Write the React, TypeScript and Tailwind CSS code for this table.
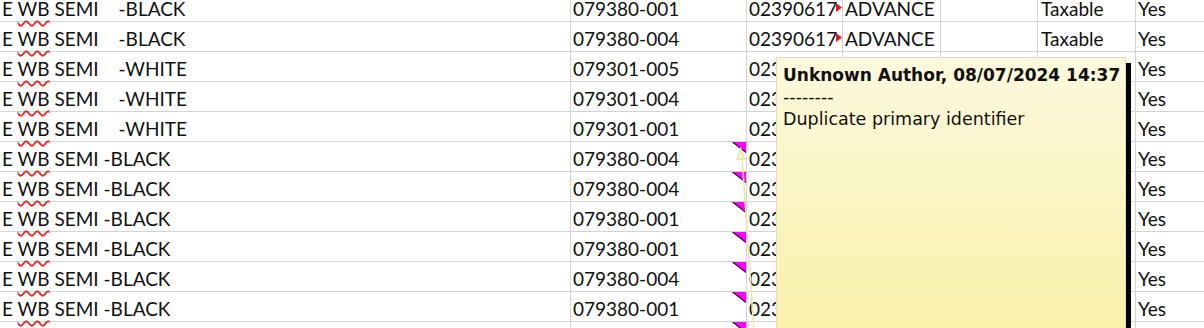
import React from "react";

type Row = {
  a?: string;
  aGap?: number;
  aTail?: string;
  b?: string;
  c?: string;
  d?: string;
  f?: string;
  g?: string;
  redArrow?: boolean;
  mark?: boolean;
};

const rows: Row[] = [
  { a: "E WB SEMI", aGap: 1, aTail: "-BLACK", b: "079380-001", c: "02390617", d: "ADVANCE", f: "Taxable", g: "Yes", redArrow: true },
  { a: "E WB SEMI", aGap: 1, aTail: "-BLACK", b: "079380-004", c: "02390617", d: "ADVANCE", f: "Taxable", g: "Yes", redArrow: true },
  { a: "E WB SEMI", aGap: 1, aTail: "-WHITE", b: "079301-005", c: "02390617", g: "Yes" },
  { a: "E WB SEMI", aGap: 1, aTail: "-WHITE", b: "079301-004", c: "02390617", g: "Yes" },
  { a: "E WB SEMI", aGap: 1, aTail: "-WHITE", b: "079301-001", c: "02390617", g: "Yes" },
  { a: "E WB SEMI", aGap: 0, aTail: "-BLACK", b: "079380-004", c: "02390617", g: "Yes", mark: true },
  { a: "E WB SEMI", aGap: 0, aTail: "-BLACK", b: "079380-004", c: "02390617", g: "Yes", mark: true },
  { a: "E WB SEMI", aGap: 0, aTail: "-BLACK", b: "079380-001", c: "02390617", g: "Yes", mark: true },
  { a: "E WB SEMI", aGap: 0, aTail: "-BLACK", b: "079380-001", c: "02390617", g: "Yes", mark: true },
  { a: "E WB SEMI", aGap: 0, aTail: "-BLACK", b: "079380-004", c: "02390617", g: "Yes", mark: true },
  { a: "E WB SEMI", aGap: 0, aTail: "-BLACK", b: "079380-001", c: "02390617", g: "Yes", mark: true },
  { mark: true },
];

function ColA({ row }: { row: Row }) {
  if (!row.a) return null;
  return (
    <span className="whitespace-pre">
      E{" "}
      <span className="underline decoration-wavy decoration-[#e0302a] decoration-[1.5px] underline-offset-[4px]">WB</span>
      {" SEMI "}
      {row.aGap ? <span className="inline-block w-[15px]" /> : null}
      {row.aTail}
    </span>
  );
}

function Magenta() {
  return (
    <svg className="absolute right-0 top-0" width="14" height="11" viewBox="0 0 14 11">
      <polygon points="0.5,0 14,0 14,10.5" fill="#ff00ff" />
      <line x1="0.5" y1="0" x2="14" y2="10.5" stroke="#2a1a2a" strokeWidth="1.2" />
    </svg>
  );
}

function RedArrow() {
  return (
    <svg className="absolute right-0 top-[11px]" width="6" height="9" viewBox="0 0 6 9">
      <polygon points="0,0 6,4.5 0,9" fill="#e8141c" />
    </svg>
  );
}

export default function App() {
  return (
    <div className="relative w-[1204px] h-[328px] overflow-hidden bg-white text-[#111] font-['Lato',sans-serif] text-[19px] leading-[22px]">
      <div className="mt-[-8px] flex flex-col">
        {rows.map((row, i) => (
          <div key={i} className="flex h-[30px] shrink-0 border-b border-[#d4d4d4]">
            <div className="w-[571px] shrink-0 border-r border-[#d4d4d4] flex items-end pl-[2px] pb-[1px]">
              <ColA row={row} />
            </div>
            <div className="relative w-[176px] shrink-0 border-r border-[#d4d4d4] flex items-end pl-[2px] pb-[1px] overflow-hidden">
              {row.b}
              {row.mark ? <Magenta /> : null}
            </div>
            <div className="relative w-[96px] shrink-0 border-r border-[#d4d4d4] flex items-end pl-[2px] pb-[1px] overflow-hidden">
              <span className="whitespace-nowrap">{row.c}</span>
              {row.redArrow ? <RedArrow /> : null}
            </div>
            <div className="w-[98px] shrink-0 border-r border-[#d4d4d4] flex items-end pl-[2px] pb-[1px] overflow-hidden">
              {row.d}
            </div>
            <div className="w-[97px] shrink-0 border-r border-[#d4d4d4] flex items-end pl-[2px] pb-[1px] overflow-hidden" />
            <div className="w-[98px] shrink-0 border-r border-[#d4d4d4] flex items-end pl-[3px] pb-[1px] overflow-hidden">
              {row.f}
            </div>
            <div className="flex-1 flex items-end pl-[2px] pb-[1px] overflow-hidden">{row.g}</div>
          </div>
        ))}
      </div>

      {/* connector arrow from note to cell */}
      <svg className="pointer-events-none absolute left-0 top-0" width="1204" height="328" viewBox="0 0 1204 328">
        <line x1="754" y1="332" x2="742" y2="156" stroke="#efe7a6" strokeWidth="1.6" />
        <polygon points="740.5,147 736.5,160 745,159" fill="#f5f0c2" stroke="#d9d196" strokeWidth="0.6" />
      </svg>

      {/* comment popup */}
      <div className="absolute left-[776px] top-[57px] w-[350px] h-[300px] border border-[#e6dfa8] bg-linear-to-b from-[#fcf8dc] to-[#f8f1a4] shadow-[5px_6px_0_0_#000] pl-[6px] pt-[6px] font-['DejaVu_Sans',sans-serif] text-[17.5px] leading-[22px] text-[#111]">
        <div className="font-bold whitespace-nowrap text-[17px]">Unknown Author, 08/07/2024 14:37</div>
        <div>--------</div>
        <div>Duplicate primary identifier</div>
      </div>
    </div>
  );
}
